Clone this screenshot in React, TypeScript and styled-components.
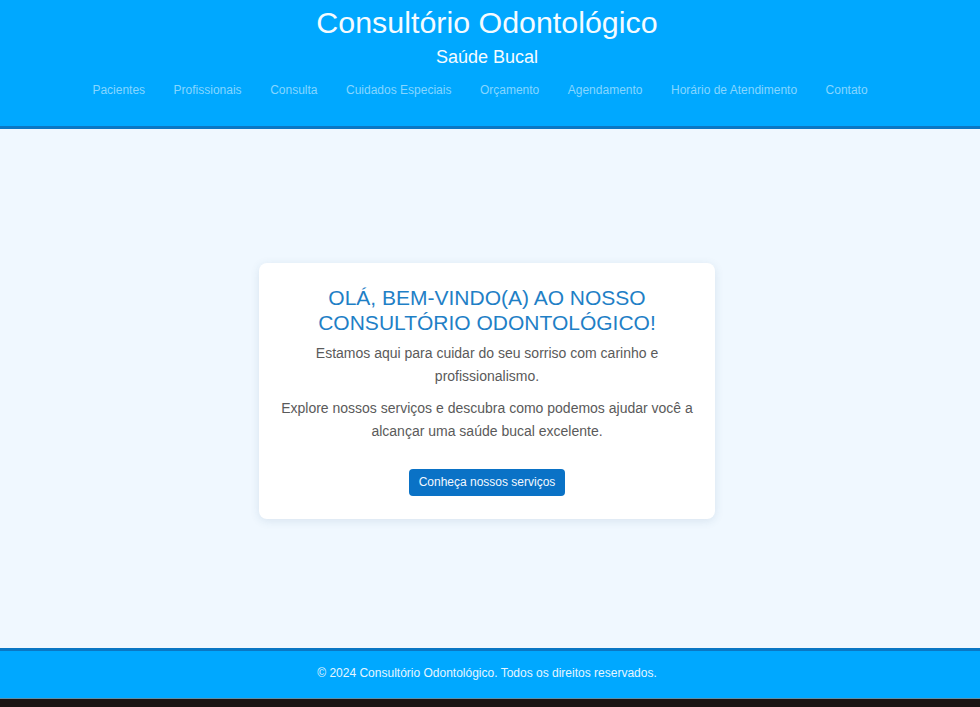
import React from "react";
import styled, { createGlobalStyle } from "styled-components";

const GlobalStyle = createGlobalStyle`
  html, body {
    margin: 0;
    padding: 0;
    height: 100%;
  }
  body {
    font-family: "Liberation Sans", Arial, sans-serif;
    background: #f0f8ff;
  }
  #root {
    min-height: 100vh;
  }
`;

const Page = styled.div`
  display: flex;
  flex-direction: column;
  min-height: 100vh;
  height: 707px;
`;

const Header = styled.header`
  background: #00a8ff;
  border-bottom: 3px solid #0a77c4;
  padding: 4px 6px 21px 0;
  text-align: center;
  flex: 0 0 auto;
`;

const Title = styled.h1`
  margin: 0;
  font-size: 30.4px;
  line-height: 36px;
  font-weight: 400;
  color: #f4fbff;
`;

const Subtitle = styled.p`
  margin: 6px 0 0;
  font-size: 18px;
  line-height: 22px;
  color: #f4fbff;
`;

const Nav = styled.nav`
  margin-top: 7px;
  padding-right: 14px;
  display: flex;
  justify-content: center;
  gap: 28.5px;
`;

const NavLink = styled.a`
  display: block;
  padding: 8px 0;
  font-size: 12px;
  line-height: 14px;
  color: #86d6ff;
  text-decoration: none;
`;

const Main = styled.main`
  flex: 1 1 auto;
  display: flex;
  align-items: center;
  justify-content: center;
  padding: 4px 6px 0 0;
  background: #f0f8ff;
`;

const Card = styled.section`
  box-sizing: border-box;
  width: 456px;
  padding: 22px 20px 23px;
  background: #ffffff;
  border-radius: 8px;
  box-shadow: 0 2px 10px rgba(40, 80, 120, 0.12);
  text-align: center;
`;

const CardTitle = styled.h2`
  margin: 0 0 7px;
  font-size: 21px;
  line-height: 25px;
  font-weight: 400;
  color: #1f80c6;
  text-transform: uppercase;
`;

const Text = styled.p`
  margin: 0 0 9px;
  font-size: 14px;
  line-height: 23px;
  color: #5a5a5a;
`;

const Actions = styled.div`
  margin-top: 26px;
  display: flex;
  justify-content: center;
`;

const Button = styled.a`
  display: inline-block;
  padding: 6px 10px;
  font-size: 12px;
  line-height: 15px;
  color: #f2f8ff;
  background: #0a72c6;
  border-radius: 4px;
  text-decoration: none;
`;

const Footer = styled.footer`
  flex: 0 0 auto;
  background: #00a8ff;
  border-top: 3px solid #0a77c4;
  padding: 15px 6px 18px 0;
  text-align: center;
`;

const FooterText = styled.p`
  margin: 0;
  font-size: 12px;
  line-height: 14px;
  color: #e6f6ff;
`;

const BottomStrip = styled.div`
  flex: 0 0 9px;
  background: #1b1413;
  border-top: 1px solid #5f8ea6;
  box-sizing: border-box;
`;

const links = [
  "Pacientes",
  "Profissionais",
  "Consulta",
  "Cuidados Especiais",
  "Orçamento",
  "Agendamento",
  "Horário de Atendimento",
  "Contato",
];

export default function App() {
  return (
    <>
      <GlobalStyle />
      <Page>
        <Header>
          <Title>Consultório Odontológico</Title>
          <Subtitle>Saúde Bucal</Subtitle>
          <Nav>
            {links.map((l) => (
              <NavLink key={l} href="#">
                {l}
              </NavLink>
            ))}
          </Nav>
        </Header>
        <Main>
          <Card>
            <CardTitle>Olá, bem-vindo(a) ao nosso consultório odontológico!</CardTitle>
            <Text>Estamos aqui para cuidar do seu sorriso com carinho e profissionalismo.</Text>
            <Text>
              Explore nossos serviços e descubra como podemos ajudar você a alcançar uma saúde bucal
              excelente.
            </Text>
            <Actions>
              <Button href="#">Conheça nossos serviços</Button>
            </Actions>
          </Card>
        </Main>
        <Footer>
          <FooterText>© 2024 Consultório Odontológico. Todos os direitos reservados.</FooterText>
        </Footer>
        <BottomStrip />
      </Page>
    </>
  );
}
